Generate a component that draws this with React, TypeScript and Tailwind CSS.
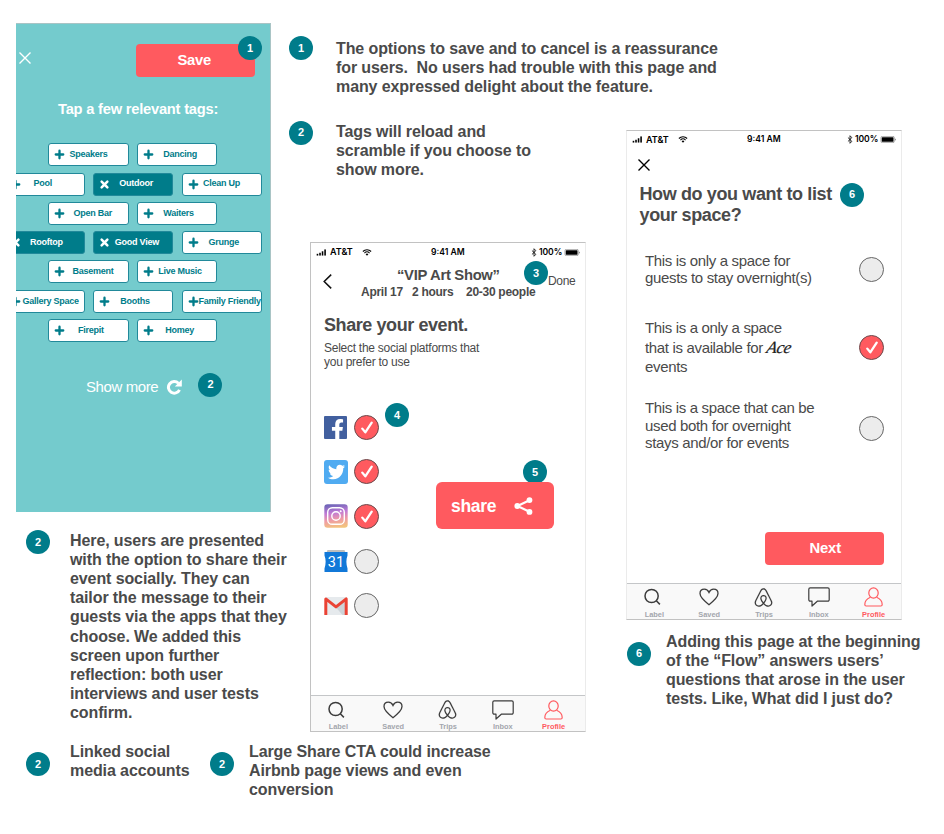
import type { ReactNode } from "react";
import { FaAirbnb, FaFacebookF, FaTwitter } from "react-icons/fa";

function Badge({ n, className = "" }: { n: number; className?: string }) {
  return (
    <span
      className={`flex h-6 w-6 shrink-0 items-center justify-center rounded-full bg-[#007c8a] text-[11px] leading-none font-bold text-white ${className}`}
    >
      {n}
    </span>
  );
}

function Note({ lines, className = "" }: { lines: string[]; className?: string }) {
  return (
    <div
      className={`text-[16px] leading-[19.2px] font-bold tracking-[-0.1px] whitespace-pre text-[#4a4a4a] ${className}`}
    >
      {lines.map((line) => (
        <p key={line}>{line}</p>
      ))}
    </div>
  );
}

function Cross({ className = "" }: { className?: string }) {
  return (
    <svg viewBox="0 0 12 12" className={`h-3 w-3 ${className}`} fill="none" stroke="currentColor" strokeWidth="1.4">
      <path d="M.5.5l11 11M11.5.5l-11 11" />
    </svg>
  );
}

/* ---------- Tag picker screen ---------- */

type Tag = { label: string; indent: string; on?: boolean };

const tagRows: Tag[][] = [
  [
    { label: "Speakers", indent: "pl-[20.5px]" },
    { label: "Dancing", indent: "pl-[25.5px]" },
  ],
  [
    { label: "Pool", indent: "pl-[28.5px]" },
    { label: "Outdoor", indent: "pl-[25.5px]", on: true },
    { label: "Clean Up", indent: "pl-[20.5px]" },
  ],
  [
    { label: "Open Bar", indent: "pl-[24.5px]" },
    { label: "Waiters", indent: "pl-[25.5px]" },
  ],
  [
    { label: "Rooftop", indent: "pl-[25px]", on: true },
    { label: "Good View", indent: "pl-[21px]", on: true },
    { label: "Grunge", indent: "pl-[26px]" },
  ],
  [
    { label: "Basement", indent: "pl-[23.5px]" },
    { label: "Live Music", indent: "pl-[20.5px]" },
  ],
  [
    { label: "Gallery Space", indent: "pl-[17.5px]" },
    { label: "Booths", indent: "pl-[26.5px]" },
    { label: "Family Friendly", indent: "pl-[16px]" },
  ],
  [
    { label: "Firepit", indent: "pl-[29px]" },
    { label: "Homey", indent: "pl-[27.5px]" },
  ],
];

function TagPill({ label, indent, on }: Tag) {
  return (
    <div
      className={`relative flex h-[23px] w-[80.5px] shrink-0 items-center rounded-[3px] border border-[#21899a] text-[9px] font-bold tracking-[-0.25px] whitespace-nowrap ${
        on ? "bg-[#007c8a] text-white" : "bg-white text-[#007c8a]"
      } ${indent}`}
    >
      <svg
        viewBox="0 0 10 10"
        className="absolute top-[5px] left-[5px] h-[11px] w-[11px]"
        fill="none"
        stroke="currentColor"
        strokeLinecap="round"
      >
        {on ? (
          <path d="M2.4 2.4l5.2 5.2M7.6 2.4L2.4 7.6" strokeWidth="2.3" />
        ) : (
          <path d="M5 1.6v6.8M1.6 5h6.8" strokeWidth="2.1" />
        )}
      </svg>
      {label}
    </div>
  );
}

function ReloadIcon({ className = "" }: { className?: string }) {
  return (
    <svg viewBox="0 0 16 16" className={`h-4 w-4 ${className}`}>
      <path d="M12.400 4.300A5.800 5.800 0 1 0 13.500 10.800" fill="none" stroke="currentColor" strokeWidth="3" />
      <path d="M15.800.4v7H8.800z" fill="currentColor" />
    </svg>
  );
}

function TagScreen() {
  return (
    <section className="relative ml-4 h-[489px] w-[255px] overflow-hidden border-t border-r border-[#a9c4c5] bg-[#74cbcd]">
      <div className="mt-[20px] flex h-[33px] items-start justify-between pr-[15px] pl-[3px] text-white">
        <Cross className="mt-[8px]" />
        <button className="h-[33px] w-[119.5px] rounded-[4px] bg-[#ff5a5f] pr-[2px] text-[14.8px] font-bold tracking-[-0.25px]">
          Save
        </button>
      </div>
      <Badge n={1} className="absolute top-[12px] left-[222px]" />
      <h2 className="mt-[22px] pl-[42px] text-[14.7px] leading-5 font-bold tracking-[-0.22px] whitespace-nowrap text-white">
        Tap a few relevant tags:
      </h2>
      <div className="mt-[24.3px] flex flex-col gap-[6.3px]">
        {tagRows.map((row, i) => (
          <div key={i} className={`flex gap-[8.300px] ${i % 2 ? "-ml-[12px]" : "ml-[32px]"}`}>
            {row.map((t) => (
              <TagPill key={t.label} {...t} />
            ))}
          </div>
        ))}
      </div>
      <div className="mt-[32px] flex items-center pl-[70px] text-[15px] leading-[22px] tracking-[-0.4px] text-white">
        <span className="mt-[2px]">Show more</span>
        <ReloadIcon className="mt-[2px] ml-[8px]" />
        <Badge n={2} className="-mt-[3px] ml-[16px]" />
      </div>
    </section>
  );
}

/* ---------- Shared phone chrome ---------- */

function StatusBar() {
  return (
    <div className="flex h-[18px] items-center pl-[5px] font-[Inter,sans-serif] text-[8.2px] font-semibold text-black">
      <svg viewBox="0 0 11 8" className="h-[7px] w-[11px]" fill="currentColor">
        <rect x="0" y="5.5" width="1.8" height="2" />
        <rect x="2.9" y="4.3" width="1.8" height="3.2" />
        <rect x="5.8" y="2.6" width="1.8" height="4.9" />
        <rect x="8.7" y=".5" width="1.8" height="7" />
      </svg>
      <span className="ml-[3px] w-[24px] text-[9px]">AT&amp;T</span>
      <svg viewBox="0 0 12 9" className="ml-[8px] h-[7px] w-[10px]" fill="none" stroke="currentColor" strokeWidth="1.4">
        <path d="M.7 3.2a7.6 7.6 0 0 1 10.6 0M2.7 5.2a4.7 4.7 0 0 1 6.6 0" />
        <path d="M6 8.6L4.2 6.8a2.6 2.6 0 0 1 3.6 0z" fill="currentColor" stroke="none" />
      </svg>
      <span className="ml-[59px] w-[35px] text-[8.6px]">9:41 AM</span>
      <svg viewBox="0 0 6 10" className="ml-[65px] h-[9px] w-[6px]" fill="none" stroke="currentColor" strokeWidth=".9">
        <path d="M.7 2.8l4.4 4.3L3 9.2V.8l2.1 2.1L.7 7.2" />
      </svg>
      <span className="ml-[2px] w-[23px] text-[8.600px] tracking-[-0.1px]">100%</span>
      <svg viewBox="0 0 18 8" className="ml-[2px] h-[7px] w-[17px]">
        <rect x=".4" y=".4" width="15.2" height="7.2" rx="1.5" fill="none" stroke="#777" strokeWidth=".7" />
        <rect x="1.3" y="1.3" width="13.4" height="5.4" rx=".7" />
        <path d="M16.6 2.8c1.2.4 1.2 2 0 2.4z" fill="#777" />
      </svg>
    </div>
  );
}

function NavItem({ label, active, className = "", children }: { label: string; active?: boolean; className?: string; children: ReactNode }) {
  return (
    <div
      className={`flex flex-col items-center pt-[3px] text-[7.4px] font-bold ${
        active ? "text-[#ff5a5f]" : "text-[#a3a6ad]"
      } ${className}`}
    >
      <div className={`flex h-[21px] items-center ${active ? "text-[#ff5a5f]" : "text-[#3c3c3c]"}`}>{children}</div>
      <span className="mt-[2px] leading-[9px]">{label}</span>
    </div>
  );
}

function NavBar({ profileClass = "" }: { profileClass?: string }) {
  return (
    <nav className="grid h-[36px] grid-cols-5 border-t border-[#c4c6c8] bg-[#f9f9f9]">
      <NavItem label="Label">
        <svg viewBox="0 0 17 18" className="mr-[4px] h-[18px] w-[17px]" fill="none" stroke="currentColor" strokeWidth="1.500">
          <circle cx="7.6" cy="8" r="6.6" />
          <path d="M12.3 12.8l3.6 3.6" />
        </svg>
      </NavItem>
      <NavItem label="Saved">
        <svg viewBox="0 0 20 18" className="h-[18px] w-[20px]" fill="none" stroke="currentColor" strokeWidth="1.300">
          <path d="M10 16.7C6 13.6 1 9.6 1 5.6 1 3 2.9 1.2 5.4 1.2c2 0 3.7 1.2 4.6 3.2.9-2 2.600-3.200 4.600-3.200C17.100 1.200 19 3 19 5.600c0 4-5 8-9 11.100z" />
        </svg>
      </NavItem>
      <NavItem label="Trips">
        <FaAirbnb className="h-[21px] w-[19px]" preserveAspectRatio="none" stroke="currentColor" strokeWidth="2" />
      </NavItem>
      <NavItem label="Inbox">
        <svg viewBox="0 0 22 20" className="h-[20px] w-[22px]" fill="none" stroke="currentColor" strokeWidth="1.200" strokeLinejoin="round">
          <path d="M2.200.8h17.600a1.400 1.400 0 0 1 1.400 1.400v10.600a1.400 1.400 0 0 1-1.400 1.400H9.300L4 19v-4.800H2.200A1.400 1.400 0 0 1 .8 12.800V2.200A1.400 1.400 0 0 1 2.200.8z" />
        </svg>
      </NavItem>
      <NavItem label="Profile" active className={profileClass}>
        <svg viewBox="0 0 19 20" className="h-[20px] w-[19px]" fill="none" stroke="currentColor" strokeWidth="1.200" strokeLinejoin="round">
          <ellipse cx="9.500" cy="6" rx="4.700" ry="5.200" />
          <path d="M6.400 10.200C3.200 11.500.8 14.200.8 17.500c0 1 .4 1.500 1.300 1.500h14.800c.9 0 1.300-.5 1.300-1.500 0-3.300-2.400-6-5.600-7.300" />
        </svg>
      </NavItem>
    </nav>
  );
}

function Radio({ on, className = "" }: { on?: boolean; className?: string }) {
  return (
    <span
      className={`flex h-[25px] w-[25px] shrink-0 items-center justify-center rounded-full border ${
        on ? "border-[#6b4a4c] bg-[#ff5a5f]" : "border-[#666] bg-[#ececec]"
      } ${className}`}
    >
      {on && (
        <svg viewBox="0 0 12 13" className="h-[13px] w-[12px]" fill="none" stroke="white" strokeWidth="2.300" strokeLinecap="round" strokeLinejoin="round">
          <path d="M1.300 7.600l3 3.700L10.700 1.600" />
        </svg>
      )}
    </span>
  );
}

/* ---------- Share screen ---------- */

function ShareIcon({ className = "" }: { className?: string }) {
  return (
    <svg viewBox="0 0 19 18" className={`h-[18px] w-[19px] ${className}`} fill="currentColor">
      <path d="M15.500 3.200L3.500 9l12 5.800" fill="none" stroke="currentColor" strokeWidth="2.200" />
      <circle cx="3.300" cy="9" r="2.900" />
      <circle cx="15.500" cy="3.100" r="2.900" />
      <circle cx="15.500" cy="14.900" r="2.900" />
    </svg>
  );
}

function InstagramIcon() {
  return (
    <svg viewBox="0 0 24 24" className="h-6 w-6">
      <defs>
        <linearGradient id="ig" x1=".4" y1="0" x2=".55" y2="1">
          <stop offset="0" stopColor="#6f66b8" />
          <stop offset=".35" stopColor="#c07ad6" />
          <stop offset=".65" stopColor="#ee9aa6" />
          <stop offset="1" stopColor="#f3c47c" />
        </linearGradient>
      </defs>
      <rect x=".3" y=".3" width="23.400" height="23.400" rx="3.200" fill="url(#ig)" />
      <g fill="none" stroke="white" strokeWidth="1.400">
        <rect x="3.700" y="3.700" width="16.600" height="16.600" rx="4.600" />
        <circle cx="12" cy="12" r="4.200" />
      </g>
      <circle cx="16.700" cy="7.300" r="1" fill="white" />
    </svg>
  );
}

function CalendarIcon() {
  return (
    <svg viewBox="0 0 24 22" className="h-[22px] w-6">
      <path d="M3.500 0h17l1 2.500h-19z" fill="#bdbdbd" />
      <path d="M.5 2h23v3.500c-1.500 3.500-1.500 8.500 0 13V22H.5v-3.500c1.500-4.500 1.500-9.500 0-13z" fill="#1178d8" />
      <text x="12" y="17" textAnchor="middle" fontSize="14.500" fontFamily="Roboto, sans-serif" fill="white">
        31
      </text>
    </svg>
  );
}

function GmailIcon() {
  return (
    <svg viewBox="0 0 24 18" className="h-[18px] w-6">
      <rect x="1" y="0" width="22" height="18" rx="1.500" fill="#e6eaed" />
      <path d="M12 10.500L22 3v15h-3.500z" fill="#cdd3d7" />
      <path d="M1.800 18V1.900L12 9.900l10.200-8V18" fill="none" stroke="#ea4335" strokeWidth="3" strokeLinejoin="round" />
    </svg>
  );
}

const platforms: { name: string; icon: ReactNode; on?: boolean }[] = [
  {
    name: "Facebook",
    on: true,
    icon: (
      <div className="flex h-[23px] w-[23px] items-end justify-end overflow-hidden rounded-[1px] bg-[#42609f] pr-[3px] text-white">
        <FaFacebookF className="-mb-px h-[21px] w-[13px]" preserveAspectRatio="none" />
      </div>
    ),
  },
  {
    name: "Twitter",
    on: true,
    icon: (
      <div className="flex h-6 w-6 items-center justify-center rounded-[3px] bg-[#50abf1] text-white">
        <FaTwitter className="h-[18px] w-[17px]" preserveAspectRatio="none" />
      </div>
    ),
  },
  { name: "Instagram", on: true, icon: <InstagramIcon /> },
  { name: "Calendar", icon: <CalendarIcon /> },
  { name: "Gmail", icon: <GmailIcon /> },
];

function ShareScreen() {
  return (
    <section className="relative flex h-[490px] w-[276px] flex-col border border-[#c2c2c2] border-r-[#ebebeb] bg-white text-[#4a4a4a]">
      <StatusBar />
      <header className="flex h-[40px] items-start">
        <svg viewBox="0 0 9 15" className="mt-[13px] ml-[12px] h-[15px] w-[9px]" fill="none" stroke="#111" strokeWidth="1.500">
          <path d="M8.200.6L1.200 7.500l7 6.900" />
        </svg>
        <div className="ml-[29px] w-[176px] font-bold whitespace-nowrap">
          <h2 className="mt-[5px] pl-[36px] text-[14.800px] leading-[18px] tracking-[-0.3px]">“VIP Art Show”</h2>
          <p className="flex text-[12px] leading-[16px] tracking-[-0.28px]">
            <span className="w-[51px]">April 17</span>
            <span className="w-[54px]">2 hours</span>
            <span>20-30 people</span>
          </p>
        </div>
        <span className="mt-[12px] ml-[11px] text-[12px] leading-[16px] tracking-[-0.3px]">Done</span>
      </header>
      <Badge n={3} className="absolute top-[18px] left-[213px]" />
      <h1 className="mt-[13px] ml-[13px] text-[18px] leading-[22px] font-bold tracking-[-0.42px]">Share your event.</h1>
      <p className="mt-[5px] ml-[13px] text-[12px] leading-[14px] tracking-[-0.26px]">
        Select the social platforms that
        <br />
        you prefer to use
      </p>
      <div className="mt-[45.500px] flex">
        <ul className="ml-[13px] flex flex-col gap-[19.600px]">
          {platforms.map((p) => (
            <li key={p.name} className="flex items-center">
              <div className="flex h-[25px] w-[30px] items-center">{p.icon}</div>
              <Radio on={p.on} />
            </li>
          ))}
        </ul>
        <div className="relative mt-[67.500px] ml-[57px]">
          <Badge n={5} className="absolute -top-[22px] left-[87px]" />
          <button className="relative flex h-[47px] w-[117.500px] items-center rounded-[6px] bg-[#ff5a5f] pl-[15px] text-[17.500px] font-bold tracking-[-0.3px] text-white">
            share
            <ShareIcon className="mt-px ml-[18px]" />
          </button>
        </div>
      </div>
      <Badge n={4} className="absolute top-[160px] left-[74px]" />
      <div className="mt-auto">
        <NavBar profileClass="pr-[8px]" />
      </div>
    </section>
  );
}

/* ---------- Listing type screen ---------- */

function Option({
  children,
  on,
  radioClass,
  className,
}: {
  children: ReactNode;
  on?: boolean;
  radioClass?: string;
  className: string;
}) {
  return (
    <div
      className={`flex items-center justify-between pr-[17px] pl-[18px] text-[15px] tracking-[-0.34px] whitespace-nowrap ${className}`}
    >
      <div>{children}</div>
      <Radio on={on} className={radioClass} />
    </div>
  );
}

function ListingScreen() {
  return (
    <section className="flex h-[490px] w-[276px] flex-col border border-[#ebebeb] border-t-[#c2c2c2] border-b-[#c2c2c2] bg-white text-[#4a4a4a]">
      <StatusBar />
      <Cross className="mt-[10px] ml-[11px] text-black" />
      <div className="mt-[12px] ml-[12.500px] flex">
        <h1 className="mt-px w-[200.500px] text-[18px] leading-[21.500px] font-bold tracking-[-0.38px] whitespace-nowrap">
          How do you want to list
          <br />
          your space?
        </h1>
        <Badge n={6} />
      </div>
      <Option className="mt-[25px] leading-[17.500px]">
        This is only a space for
        <br />
        guests to stay overnight(s)
      </Option>
      <Option on className="mt-[31.500px] leading-[19.500px]">
        This is a only a space
        <br />
        that is available for{" "}
        <span className="inline-block origin-left -skew-x-12 font-['Liberation_Serif',serif] text-[17px] leading-none tracking-[-0.5px] text-[#222] italic [-webkit-text-stroke:0.2px_#222]">
          Ace
        </span>
        <br />
        events
      </Option>
      <Option className="mt-[22.500px] leading-[17.500px]" radioClass="mt-[6px]">
        This is a space that can be
        <br />
        used both for overnight
        <br />
        stays and/or for events
      </Option>
      <button className="mt-auto mr-[17px] mb-[18px] h-[33px] w-[119.500px] self-end rounded-[4px] bg-[#ff5a5f] pl-[2px] text-[14.800px] font-bold tracking-[-0.2px] text-white">
        Next
      </button>
      <NavBar />
    </section>
  );
}

/* ---------- Annotated board ---------- */

export default function App() {
  return (
    <main className="h-[834px] w-[944px] overflow-hidden bg-white font-['Liberation_Sans',Arial,sans-serif]">
      <div className="flex h-[742px]">
        <div className="w-[289px] pt-[23px]">
          <TagScreen />
          <div className="mt-[18px] flex pl-[26px]">
            <Badge n={2} />
            <Note
              className="mt-[0.5px] ml-[20px]"
              lines={[
                "Here, users are presented",
                "with the option to share their",
                "event socially. They can",
                "tailor the message to their",
                "guests via the apps that they",
                "choose. We added this",
                "screen upon further",
                "reflection: both user",
                "interviews and user tests",
                "confirm.",
              ]}
            />
          </div>
        </div>
        <div className="pt-[36px]">
          <div className="flex">
            <Badge n={1} />
            <Note
              className="mt-[3px] ml-[23px]"
              lines={[
                "The options to save and to cancel is a reassurance",
                "for users.  No users had trouble with this page and",
                "many expressed delight about the feature.",
              ]}
            />
          </div>
          <div className="mt-[24px] flex">
            <div className="w-[337px]">
              <div className="flex">
                <Badge n={2} />
                <Note
                  className="mt-px ml-[23px]"
                  lines={["Tags will reload and", "scramble if you choose to", "show more."]}
                />
              </div>
              <div className="mt-[63px] ml-[21px]">
                <ShareScreen />
              </div>
            </div>
            <div className="pt-[9px]">
              <ListingScreen />
              <div className="mt-[12px] flex pl-px">
                <Badge n={6} className="mt-[10px]" />
                <Note
                  className="ml-[15px]"
                  lines={[
                    "Adding this page at the beginning",
                    "of the “Flow” answers users’",
                    "questions that arose in the user",
                    "tests. Like, What did I just do?",
                  ]}
                />
              </div>
            </div>
          </div>
        </div>
      </div>
      <div className="flex pl-[26px]">
        <Badge n={2} className="mt-[10px]" />
        <Note className="ml-[20px] w-[140px]" lines={["Linked social", "media accounts"]} />
        <Badge n={2} className="mt-[10px]" />
        <Note
          className="ml-[15px]"
          lines={["Large Share CTA could increase", "Airbnb page views and even", "conversion"]}
        />
      </div>
    </main>
  );
}
